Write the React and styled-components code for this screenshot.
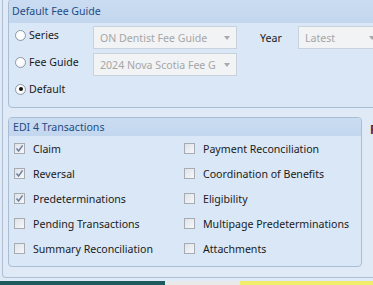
import React from "react";
import styled, { createGlobalStyle } from "styled-components";

const GlobalStyle = createGlobalStyle`
  html, body {
    margin: 0;
    padding: 0;
    width: 373px;
    height: 285px;
    overflow: hidden;
    background: #dfeaf6;
    font-family: "Noto Sans", "Open Sans", sans-serif;
    font-size: 10.6px;
  }
`;

const Page = styled.div`
  display: flex;
  flex-direction: column;
  width: 373px;
  height: 285px;
  overflow: hidden;
`;

const Frame = styled.div`
  height: 278px;
  margin-left: 2px;
  box-sizing: border-box;
  border-left: 1px solid #aebfd3;
  border-bottom: 1px solid #aebfd3;
  border-bottom-left-radius: 4px;
  padding-left: 5px;
  display: flex;
  flex-direction: column;
  gap: 9px;
`;

const Group = styled.div`
  box-sizing: border-box;
  border: 1px solid #a9bdd5;
  border-radius: 4px;
  background: #d9e7f6;
  overflow: hidden;
  width: ${(p) => p.$width};
  margin-top: ${(p) => p.$top || "0px"};
  flex-shrink: 0;
`;

const GroupHeader = styled.div`
  height: ${(p) => p.$h}px;
  line-height: ${(p) => p.$h}px;
  background: linear-gradient(#cadcf1, #c2d7ee);
  color: #1f4b86;
  font-size: 10.6px;
  padding-left: ${(p) => p.$pad}px;
`;

const FeeBody = styled.div`
  height: 84px;
  box-sizing: border-box;
  padding: 3px 0 0 6px;
  display: grid;
  grid-template-columns: 78px 144px 61px 1fr;
  grid-auto-rows: 23px;
  row-gap: 4px;
  align-items: center;
`;

const RadioLabel = styled.label`
  display: flex;
  align-items: center;
  gap: 3px;
  color: #1b1b1b;
  grid-column: 1;
  margin-bottom: 5px;
`;

const RadioDot = styled.span`
  width: 11px;
  height: 11px;
  box-sizing: border-box;
  border-radius: 50%;
  border: 1px solid #8f9aa6;
  background: radial-gradient(circle at 40% 40%, #ffffff 40%, #e6e9ee);
  display: flex;
  align-items: center;
  justify-content: center;

  &::after {
    content: "";
    width: 4px;
    height: 4px;
    border-radius: 50%;
    background: #111;
    display: ${(p) => (p.$on ? "block" : "none")};
  }
`;

const Select = styled.div`
  height: 23px;
  box-sizing: border-box;
  border: 1px solid #c9d2dc;
  background: #f1f3f5;
  color: #a6a6a6;
  display: flex;
  align-items: center;
  padding: 0 6px 0 6px;
  gap: 4px;
  white-space: nowrap;
  overflow: hidden;
  grid-column: ${(p) => p.$col};
`;

const SelectText = styled.span`
  flex: 1;
  overflow: hidden;
`;

const Caret = styled.span`
  width: 0;
  height: 0;
  border-left: 3.5px solid transparent;
  border-right: 3.5px solid transparent;
  border-top: 4px solid #a9a9a9;
  flex-shrink: 0;
`;

const YearLabel = styled.span`
  grid-column: 3;
  color: #1b1b1b;
  padding-left: 23px;
`;

const EdiRow = styled.div`
  display: flex;
  align-items: flex-start;
  gap: 8px;
`;

const EdiBody = styled.div`
  display: grid;
  grid-template-columns: 170px 1fr;
  grid-auto-rows: 25px;
  padding: 0 0 5px 5px;
  align-items: center;
`;

const Check = styled.label`
  display: flex;
  align-items: center;
  gap: 8px;
  color: #1b1b1b;
  white-space: nowrap;
`;

const Box = styled.span`
  width: 11px;
  height: 11px;
  box-sizing: border-box;
  border: 1px solid #a7acb3;
  background: linear-gradient(135deg, #dfe3e8, #f6f7f9);
  display: flex;
  align-items: center;
  justify-content: center;
  flex-shrink: 0;
`;

const SideNote = styled.span`
  margin-top: 4px;
  font-size: 12px;
  font-weight: bold;
  color: #7a1536;
  white-space: nowrap;
`;

const StatusStrip = styled.div`
  margin-top: 3px;
  height: 4px;
  display: flex;
`;

const StripPart = styled.div`
  width: ${(p) => p.$w};
  flex: ${(p) => (p.$w ? "none" : 1)};
  background: ${(p) => p.$c};
`;

function Tick() {
  return (
    <svg width="9" height="9" viewBox="0 0 9 9">
      <path d="M1.5 4.5 L3.6 7 L7.6 1.4" fill="none" stroke="#6d7fa3" strokeWidth="1.5" />
    </svg>
  );
}

const left = [
  ["Claim", true],
  ["Reversal", true],
  ["Predeterminations", true],
  ["Pending Transactions", false],
  ["Summary Reconciliation", false],
];
const right = [
  "Payment Reconciliation",
  "Coordination of Benefits",
  "Eligibility",
  "Multipage Predeterminations",
  "Attachments",
];

export default function App() {
  return (
    <Page>
      <GlobalStyle />
      <Frame>
        <Group $width="calc(100% + 10px)" $top="-1px">
          <GroupHeader $h={23} $pad={3}>Default Fee Guide</GroupHeader>
          <FeeBody>
            <RadioLabel>
              <RadioDot />
              Series
            </RadioLabel>
            <Select $col={2}>
              <SelectText>ON Dentist Fee Guide</SelectText>
              <Caret />
            </Select>
            <YearLabel>Year</YearLabel>
            <Select $col={4}>
              <SelectText>Latest</SelectText>
              <Caret />
            </Select>
            <RadioLabel>
              <RadioDot />
              Fee Guide
            </RadioLabel>
            <Select $col={2}>
              <SelectText>2024 Nova Scotia Fee G</SelectText>
              <Caret />
            </Select>
            <RadioLabel>
              <RadioDot $on />
              Default
            </RadioLabel>
          </FeeBody>
        </Group>
        <EdiRow>
          <Group $width="354px">
            <GroupHeader $h={18} $pad={4}>EDI 4 Transactions</GroupHeader>
            <EdiBody>
              {left.map(([label, on], i) => (
                <React.Fragment key={label}>
                  <Check>
                    <Box>{on && <Tick />}</Box>
                    {label}
                  </Check>
                  <Check>
                    <Box />
                    {right[i]}
                  </Check>
                </React.Fragment>
              ))}
            </EdiBody>
          </Group>
          <SideNote>Required</SideNote>
        </EdiRow>
      </Frame>
      <StatusStrip>
        <StripPart $w="165px" $c="#1d5b5e" />
        <StripPart $w="75px" $c="#e9e9e9" />
        <StripPart $c="#f2ec6b" />
      </StatusStrip>
    </Page>
  );
}
